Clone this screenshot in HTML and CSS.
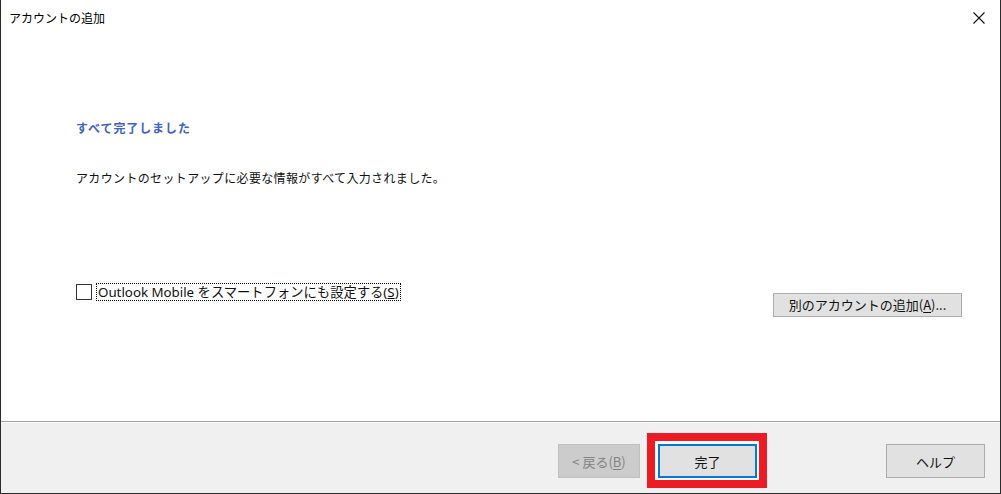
FILE: index.html
```html
<!DOCTYPE html>
<html lang="ja">
<head>
  <meta charset="utf-8">
  <title>アカウントの追加</title>
  <link rel="stylesheet" href="styles.css">
</head>
<body>
  <div class="window">
    <div class="titlebar">
      <span class="title">アカウントの追加</span>
      <span class="close">
        <svg width="12" height="12" viewBox="0 0 12 12"><path d="M0.5 0.5 L11.5 11.5 M11.5 0.5 L0.5 11.5" stroke="#111" stroke-width="1.1" fill="none"/></svg>
      </span>
    </div>

    <div class="content">
      <h2 class="heading">すべて完了しました</h2>
      <p class="desc">アカウントのセットアップに必要な情報がすべて入力されました。</p>

      <div class="option-row">
        <label class="check">
          <span class="box"></span>
          <span class="check-label">Outlook Mobile をスマートフォンにも設定する(<u>S</u>)</span>
        </label>
        <button class="btn btn-add">別のアカウントの追加(<u>A</u>)...</button>
      </div>
    </div>

    <div class="footer">
      <button class="btn btn-back" disabled>&lt; 戻る(<u>B</u>)</button>
      <div class="highlight">
        <button class="btn btn-finish">完了</button>
      </div>
      <button class="btn btn-help">ヘルプ</button>
    </div>
  </div>
</body>
</html>
```

FILE: styles.css
```css
html, body {
  margin: 0;
  padding: 0;
  background: #fff;
}

body {
  font-family: "Noto Sans CJK JP", sans-serif;
  color: #1a1a1a;
}

.window {
  width: 1001px;
  height: 494px;
  box-sizing: border-box;
  border: 1px solid #2b2b2b;
  border-top: none;
  display: flex;
  flex-direction: column;
  background: #fff;
}

.titlebar {
  height: 36px;
  display: flex;
  align-items: center;
  justify-content: space-between;
  padding: 0 15px 0 8px;
  flex-shrink: 0;
}

.title {
  font-size: 12px;
  line-height: 16px;
  color: #000;
}

.close {
  display: flex;
  width: 12px;
  height: 12px;
}

.content {
  flex: 1;
  padding: 0 38px 0 75px;
  border-bottom: 1px solid #a0a0a0;
}

.heading {
  margin: 84px 0 0 0;
  font-size: 12px;
  line-height: 16px;
  font-weight: bold;
  color: #3f62c4;
  letter-spacing: 0.9px;
}

.desc {
  margin: 34px 0 0 0;
  font-size: 12px;
  line-height: 16px;
  letter-spacing: 0.35px;
  color: #111;
}

.option-row {
  margin-top: 97px;
  display: flex;
  justify-content: space-between;
  align-items: flex-start;
}

.check {
  display: flex;
  align-items: center;
  gap: 4px;
}

.box {
  width: 14px;
  height: 14px;
  border: 1px solid #333;
  background: #fff;
}

.check-label {
  font-family: "Noto Sans", "Noto Sans CJK JP", sans-serif;
  font-size: 13.3px;
  line-height: 16px;
  padding: 0 1px;
  border: 1px dotted #000;
  color: #111;
}

.btn {
  font-family: "Noto Sans CJK JP", sans-serif;
  font-size: 13px;
  color: #111;
  background: #e1e1e1;
  border: 1px solid #adadad;
  padding: 0;
  margin: 0;
}

.btn u {
  text-underline-offset: 2px;
}

.btn-add {
  width: 189px;
  height: 24px;
  margin-top: 10px;
  line-height: 20px;
}

.footer {
  flex: none;
  height: 70px;
  box-sizing: border-box;
  margin-top: 1px;
  background: #f0f0f0;
  display: flex;
  align-items: flex-start;
  padding: 21px 15px 0 0;
}

.btn-back {
  margin-left: auto;
  width: 82px;
  height: 34px;
  background: #cccccc;
  border-color: #bfbfbf;
  color: #838383;
}

.highlight {
  margin: -11px 0 0 7px;
  border: 8px solid #ed1c24;
  background: #fff;
  padding: 3px 2px 2px 3px;
  display: flex;
}

.btn-finish {
  width: 99px;
  height: 34px;
  border: 2px solid #0078d7;
}

.btn-help {
  margin-left: 119px;
  width: 99px;
  height: 34px;
}
```
